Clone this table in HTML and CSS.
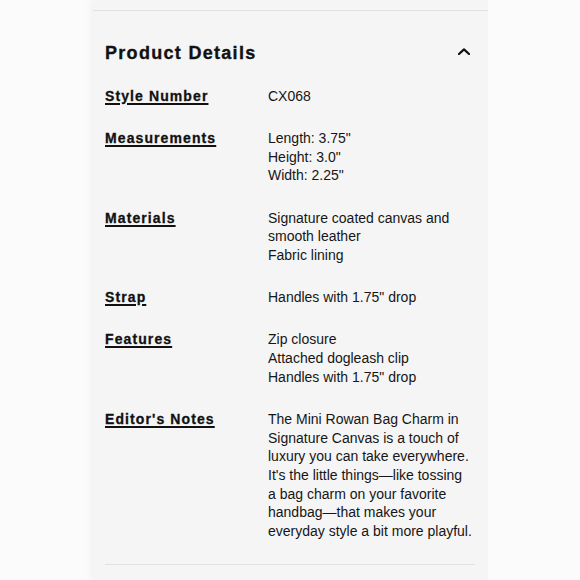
FILE: index.html
```html
<!DOCTYPE html>
<html lang="en">
<head>
<meta charset="utf-8">
<title>Product Details</title>
<link rel="stylesheet" href="styles.css">
</head>
<body>
<div class="page">
  <section class="card">
    <hr class="top-rule">
    <div class="content">
      <div class="header">
        <h2 class="title">Product Details</h2>
        <svg class="chevron" width="12" height="7" viewBox="0 0 12 7" aria-hidden="true">
          <path d="M1 6 L6 1.4 L11 6" fill="none" stroke="#111" stroke-width="2.2" stroke-linecap="round" stroke-linejoin="round"/>
        </svg>
      </div>
      <dl class="details">
        <dt class="label">Style Number</dt>
        <dd class="value">CX068</dd>
        <dt class="label">Measurements</dt>
        <dd class="value">Length: 3.75"<br>Height: 3.0"<br>Width: 2.25"</dd>
        <dt class="label">Materials</dt>
        <dd class="value">Signature coated canvas and smooth leather<br>Fabric lining</dd>
        <dt class="label">Strap</dt>
        <dd class="value">Handles with 1.75" drop</dd>
        <dt class="label">Features</dt>
        <dd class="value">Zip closure<br>Attached dogleash clip<br>Handles with 1.75" drop</dd>
        <dt class="label">Editor's Notes</dt>
        <dd class="value">The Mini Rowan Bag Charm in Signature Canvas is a touch of luxury you can take everywhere. It's the little things—like tossing a bag charm on your favorite handbag—that makes your everyday style a bit more playful.</dd>
      </dl>
      <hr class="bottom-rule">
    </div>
  </section>
</div>
</body>
</html>
```

FILE: styles.css
```css
html, body {
  margin: 0;
  padding: 0;
}

body {
  background: #fbfbfb;
  font-family: "Liberation Sans", Arial, sans-serif;
  color: #1a1a1a;
}

.page {
  height: 580px;
  overflow: hidden;
}

.card {
  margin-left: 93px;
  width: 395px;
  min-height: 580px;
  padding-top: 10px;
  box-sizing: border-box;
  background: #f5f5f5;
  box-shadow: -3px 0 6px rgba(0, 0, 0, 0.035);
}

.top-rule {
  margin: 0;
  border: 0;
  height: 1px;
  background: #e1e1e1;
}

.content {
  padding: 0 15px 0 12px;
}

.header {
  display: flex;
  align-items: center;
  justify-content: space-between;
  margin-top: 30px;
  height: 24px;
}

.title {
  margin: 0;
  font-size: 18px;
  line-height: 24px;
  font-weight: 700;
  letter-spacing: 1.3px;
  color: #111;
  -webkit-text-stroke: 0.35px #111;
}

.chevron {
  display: block;
  margin-right: 3px;
  margin-top: -4px;
}

.details {
  display: grid;
  grid-template-columns: 163px 1fr;
  row-gap: 23.5px;
  margin: 21.7px 0 0;
}

.label {
  margin: 0;
  font-size: 14px;
  line-height: 18.7px;
  font-weight: 700;
  letter-spacing: 1.1px;
  color: #111;
  -webkit-text-stroke: 0.3px #111;
  text-decoration: underline;
  text-decoration-thickness: 1.5px;
  text-underline-offset: 2px;
}

.value {
  margin: 0;
  font-size: 14px;
  line-height: 18.7px;
  color: #161616;
}

.bottom-rule {
  margin: 23.5px -2px 0 0;
  border: 0;
  height: 1px;
  background: #e1e1e1;
}
```
